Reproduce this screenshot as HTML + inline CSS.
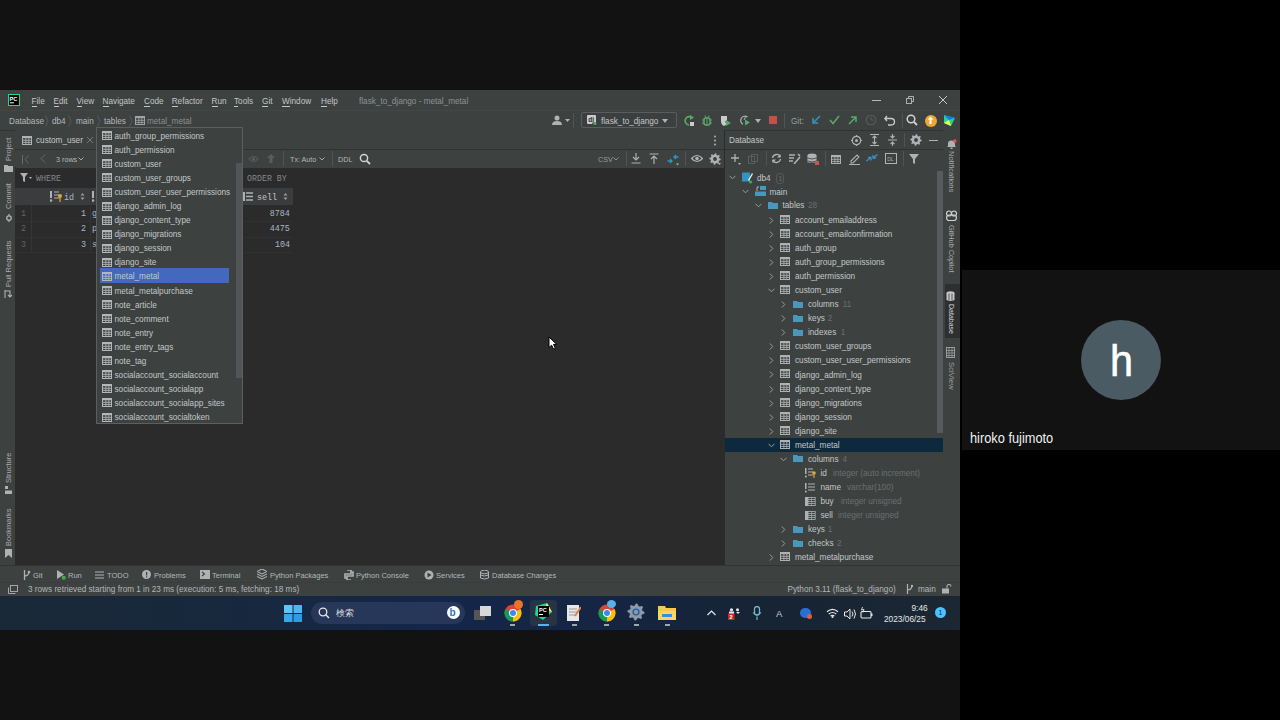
<!DOCTYPE html>
<html><head><meta charset="utf-8">
<style>
*{margin:0;padding:0;box-sizing:border-box}
html,body{width:1280px;height:720px;overflow:hidden;background:#000;font-family:"Liberation Sans",sans-serif;}
.a{position:absolute}
.t{position:absolute;white-space:nowrap;line-height:10px;color:#bbbbbb}
.m{position:absolute;white-space:nowrap;line-height:10px;color:#bbbbbb;font-family:"Liberation Mono",monospace}
.v{position:absolute;white-space:nowrap;line-height:10px;color:#bbbbbb;transform-origin:0 0;transform:rotate(-90deg)}
</style></head><body>

<div class="a" style="left:0px;top:0px;width:960px;height:720px;background:#121212;"></div>
<div class="a" style="left:0px;top:90px;width:960px;height:506px;background:#3d4241;"></div>
<svg class="a" style="left:8px;top:94px;" width="12" height="12" viewBox="0 0 12 12"><rect x="0" y="0" width="12" height="12" fill="#21d789"/><rect x="1" y="1" width="10" height="10" fill="#000"/><text x="1.6" y="6.6" font-size="5.6" font-weight="bold" fill="#fff" font-family="Liberation Sans">PC</text><rect x="2" y="8.3" width="4" height="1" fill="#fff"/></svg>
<div class="t" style="left:31.5px;top:96.5px;font-size:8.2px;color:#c4c4c4"><u style="text-decoration:none;border-bottom:0.8px solid #c4c4c4">F</u>ile</div>
<div class="t" style="left:53.5px;top:96.5px;font-size:8.2px;color:#c4c4c4"><u style="text-decoration:none;border-bottom:0.8px solid #c4c4c4">E</u>dit</div>
<div class="t" style="left:76.5px;top:96.5px;font-size:8.2px;color:#c4c4c4"><u style="text-decoration:none;border-bottom:0.8px solid #c4c4c4">V</u>iew</div>
<div class="t" style="left:102.6px;top:96.5px;font-size:8.2px;color:#c4c4c4"><u style="text-decoration:none;border-bottom:0.8px solid #c4c4c4">N</u>avigate</div>
<div class="t" style="left:144px;top:96.5px;font-size:8.2px;color:#c4c4c4"><u style="text-decoration:none;border-bottom:0.8px solid #c4c4c4">C</u>ode</div>
<div class="t" style="left:171.7px;top:96.5px;font-size:8.2px;color:#c4c4c4"><u style="text-decoration:none;border-bottom:0.8px solid #c4c4c4">R</u>efactor</div>
<div class="t" style="left:211.6px;top:96.5px;font-size:8.2px;color:#c4c4c4"><u style="text-decoration:none;border-bottom:0.8px solid #c4c4c4">R</u>un</div>
<div class="t" style="left:234px;top:96.5px;font-size:8.2px;color:#c4c4c4"><u style="text-decoration:none;border-bottom:0.8px solid #c4c4c4">T</u>ools</div>
<div class="t" style="left:262px;top:96.5px;font-size:8.2px;color:#c4c4c4"><u style="text-decoration:none;border-bottom:0.8px solid #c4c4c4">G</u>it</div>
<div class="t" style="left:282px;top:96.5px;font-size:8.2px;color:#c4c4c4"><u style="text-decoration:none;border-bottom:0.8px solid #c4c4c4">W</u>indow</div>
<div class="t" style="left:321px;top:96.5px;font-size:8.2px;color:#c4c4c4"><u style="text-decoration:none;border-bottom:0.8px solid #c4c4c4">H</u>elp</div>
<div class="t" style="left:359px;top:96.5px;font-size:8.2px;color:#8f9193;">flask_to_django - metal_metal</div>
<div class="a" style="left:872px;top:100px;width:9px;height:1px;background:#b8b8b8;"></div>
<svg class="a" style="left:905px;top:95px;" width="10" height="10" viewBox="0 0 10 10"><rect x="1.5" y="3.5" width="5" height="5" fill="none" stroke="#b0b0b0"/><path d="M3.5 3.5 V1.5 H8.5 V6.5 H6.5" fill="none" stroke="#b0b0b0"/></svg>
<svg class="a" style="left:938px;top:95px;" width="10" height="10" viewBox="0 0 10 10"><path d="M1 1 L9 9 M9 1 L1 9" stroke="#c8c8c8" stroke-width="1"/></svg>
<div class="t" style="left:9px;top:117.0px;font-size:8.2px;color:#b4b6b8;">Database</div>
<div class="t" style="left:52px;top:117.0px;font-size:8.2px;color:#b4b6b8;">db4</div>
<div class="t" style="left:76px;top:117.0px;font-size:8.2px;color:#b4b6b8;">main</div>
<div class="t" style="left:104px;top:117.0px;font-size:8.2px;color:#b4b6b8;">tables</div>
<svg class="a" style="left:45px;top:115px;" width="4" height="12" viewBox="0 0 4 12"><path d="M0.5 0.5 L3 6 L0.5 11.5" fill="none" stroke="#5d6062" stroke-width="0.8"/></svg>
<svg class="a" style="left:68px;top:115px;" width="4" height="12" viewBox="0 0 4 12"><path d="M0.5 0.5 L3 6 L0.5 11.5" fill="none" stroke="#5d6062" stroke-width="0.8"/></svg>
<svg class="a" style="left:97px;top:115px;" width="4" height="12" viewBox="0 0 4 12"><path d="M0.5 0.5 L3 6 L0.5 11.5" fill="none" stroke="#5d6062" stroke-width="0.8"/></svg>
<svg class="a" style="left:129px;top:115px;" width="4" height="12" viewBox="0 0 4 12"><path d="M0.5 0.5 L3 6 L0.5 11.5" fill="none" stroke="#5d6062" stroke-width="0.8"/></svg>
<svg class="a" style="left:135px;top:116px;" width="10" height="9" viewBox="0 0 10 9"><rect x="0.5" y="0.5" width="9" height="8" fill="none" stroke="#a0a2a4" stroke-width="1"/><rect x="0" y="0" width="10" height="2.2" fill="#a0a2a4"/><line x1="0" y1="4.3" x2="10" y2="4.3" stroke="#a0a2a4" stroke-width="0.9"/><line x1="0" y1="6.4" x2="10" y2="6.4" stroke="#a0a2a4" stroke-width="0.9"/><line x1="3.9" y1="2" x2="3.9" y2="9" stroke="#a0a2a4" stroke-width="0.8"/><line x1="6.8" y1="2" x2="6.8" y2="9" stroke="#a0a2a4" stroke-width="0.8"/></svg>
<div class="t" style="left:147px;top:117.0px;font-size:8.2px;color:#8c8e90;">metal_metal</div>
<svg class="a" style="left:551px;top:115px;" width="12" height="11" viewBox="0 0 12 11"><circle cx="6" cy="3" r="2.5" fill="#afb1b3"/><path d="M1 10 Q1 6 6 6 Q11 6 11 10 Z" fill="#afb1b3"/></svg>
<svg class="a" style="left:565px;top:119px;" width="5" height="3" viewBox="0 0 5 3"><path d="M0 0 H5 L2.5 3Z" fill="#afb1b3"/></svg>
<div class="a" style="left:580.5px;top:112px;width:96.5px;height:15.5px;border:1px solid #5a5e5e;border-radius:2px;background:#3b3f3f"></div>
<svg class="a" style="left:587px;top:115px;" width="10" height="10" viewBox="0 0 10 10"><rect x="0" y="0" width="9" height="9" rx="1" fill="#c9cbcd"/><text x="1.3" y="7" font-size="6.5" fill="#2b2b2b" font-family="Liberation Sans" font-weight="bold">dj</text><circle cx="8" cy="8.5" r="1.6" fill="#3fae4a"/></svg>
<div class="t" style="left:601px;top:116.5px;font-size:8.2px;color:#c4c6c8;">flask_to_django</div>
<svg class="a" style="left:662px;top:119px;" width="6" height="4" viewBox="0 0 6 4"><path d="M0 0 H6 L3 4Z" fill="#afb1b3"/></svg>
<svg class="a" style="left:684px;top:115px;" width="11" height="11" viewBox="0 0 11 11"><path d="M8.5 3 A4.2 4.2 0 1 0 5 10" fill="none" stroke="#59a869" stroke-width="1.6"/><path d="M6 0 L10 2.5 L6 5Z" fill="#59a869"/><rect x="6" y="7" width="4" height="4" fill="#c8cacc"/></svg>
<svg class="a" style="left:702px;top:115px;" width="10" height="11" viewBox="0 0 10 11"><rect x="2" y="3" width="6" height="7" rx="2" fill="none" stroke="#59a869" stroke-width="1.5"/><path d="M0 5 H2 M8 5 H10 M0 8 H2 M8 8 H10 M3 0.5 L4 3 M7 0.5 L6 3 M5 3 V10" stroke="#59a869" stroke-width="1"/></svg>
<svg class="a" style="left:720px;top:115px;" width="12" height="12" viewBox="0 0 12 12"><path d="M1 1 H7 V5 L5 7 L7 9 Q5 10.5 4 11 Q1 9.5 1 6 Z" fill="#c8cacc"/><path d="M6 5 L11 8 L6 11Z" fill="#59a869"/></svg>
<svg class="a" style="left:739px;top:114px;" width="12" height="12" viewBox="0 0 12 12"><path d="M8.5 3 A4.3 4.3 0 1 0 4 10.3" fill="none" stroke="#afb1b3" stroke-width="1.2"/><path d="M5 6 L6.5 3" stroke="#afb1b3" stroke-width="1"/><path d="M6 5.5 L11 8.5 L6 11.5Z" fill="#59a869"/></svg>
<svg class="a" style="left:755px;top:119px;" width="6" height="4" viewBox="0 0 6 4"><path d="M0 0 H6 L3 4Z" fill="#afb1b3"/></svg>
<div class="a" style="left:768.5px;top:116px;width:8.5px;height:8px;background:#c4504b;"></div>
<div class="a" style="left:784px;top:113px;width:1px;height:15px;background:#515456;"></div>
<div class="t" style="left:791px;top:116.5px;font-size:8.2px;color:#9a9c9e;">Git:</div>
<svg class="a" style="left:811px;top:115px;" width="10" height="10" viewBox="0 0 10 10"><path d="M9 1 L2 8 M2 3 V8 H7" fill="none" stroke="#3592c4" stroke-width="1.5"/></svg>
<svg class="a" style="left:829px;top:115px;" width="11" height="10" viewBox="0 0 11 10"><path d="M1 5 L4 8.5 L10 1" fill="none" stroke="#59a869" stroke-width="1.6"/></svg>
<svg class="a" style="left:848px;top:115px;" width="10" height="10" viewBox="0 0 10 10"><path d="M1 9 L8 2 M3 2 H8 V7" fill="none" stroke="#59a869" stroke-width="1.5"/></svg>
<svg class="a" style="left:865px;top:114px;" width="12" height="12" viewBox="0 0 12 12"><circle cx="6" cy="6" r="4.8" fill="none" stroke="#5a5d5f" stroke-width="1.1"/><path d="M6 3 V6 H8.5" fill="none" stroke="#5a5d5f"/></svg>
<svg class="a" style="left:884px;top:115px;" width="12" height="11" viewBox="0 0 12 11"><path d="M3 1 L0.8 3.5 L3 6 M1 3.5 H7 Q10.5 3.5 10.5 6.8 Q10.5 10 7 10 H4" fill="none" stroke="#c8cacc" stroke-width="1.3"/></svg>
<div class="a" style="left:901.5px;top:113px;width:1px;height:15px;background:#515456;"></div>
<svg class="a" style="left:906px;top:114px;" width="12" height="12" viewBox="0 0 12 12"><circle cx="5" cy="5" r="3.8" fill="none" stroke="#d0d2d4" stroke-width="1.5"/><path d="M8 8 L11 11" stroke="#d0d2d4" stroke-width="1.8"/></svg>
<div class="a" style="left:924.5px;top:114.5px;width:12px;height:12px;border-radius:50%;background:#f0a732"></div>
<svg class="a" style="left:927px;top:116px;" width="7" height="9" viewBox="0 0 7 9"><path d="M3.5 0.5 L0.5 3.5 H2.5 V8 H4.5 V3.5 H6.5Z" fill="#fff"/></svg>
<svg class="a" style="left:943px;top:114px;" width="13" height="13" viewBox="0 0 13 13"><path d="M1 1 L12 4 L8 12 L1 9Z" fill="#21d789"/><path d="M1 1 L12 4 L6 6Z" fill="#087cfa"/><path d="M1 9 L6 6 L8 12Z" fill="#fcf84a"/></svg>
<div class="a" style="left:0px;top:129.5px;width:960px;height:1px;background:#313434;"></div>
<div class="a" style="left:0px;top:109.5px;width:960px;height:1px;background:#424646;"></div>
<div class="a" style="left:573px;top:113px;width:1px;height:15px;background:#505455;"></div>
<div class="a" style="left:15px;top:130px;width:1px;height:435px;background:#323232;"></div>
<div class="v" style="left:3.5px;top:160.5px;font-size:7.5px;color:#a9abad">Project</div>
<svg class="a" style="left:4px;top:163.5px;" width="9" height="8" viewBox="0 0 9 8"><path d="M0 1 H3.5 L4.5 2 H9 V8 H0Z" fill="#afb1b3"/></svg>
<div class="v" style="left:3.5px;top:208.5px;font-size:7.5px;color:#a9abad">Commit</div>
<svg class="a" style="left:3.5px;top:213.5px;" width="10" height="8" viewBox="0 0 10 8"><circle cx="5" cy="4" r="2.2" fill="none" stroke="#afb1b3" stroke-width="1.3"/><path d="M5 0 V1.8 M5 6.2 V8" stroke="#afb1b3" stroke-width="1.3"/></svg>
<div class="v" style="left:3.5px;top:286.5px;font-size:7.5px;color:#a9abad">Pull Requests</div>
<svg class="a" style="left:4px;top:290px;" width="8" height="8" viewBox="0 0 8 8"><path d="M1 0 V8 M1 1 H6 V7 M4 5 L6 7 L8 5" fill="none" stroke="#afb1b3" stroke-width="1.1"/></svg>
<div class="v" style="left:3.5px;top:482.5px;font-size:7.5px;color:#a9abad">Structure</div>
<svg class="a" style="left:5px;top:486px;" width="7" height="8" viewBox="0 0 7 8"><rect x="0" y="0" width="3" height="3" fill="#afb1b3"/><rect x="0" y="4.5" width="7" height="3.5" fill="#afb1b3"/></svg>
<div class="v" style="left:3.5px;top:546px;font-size:7.5px;color:#a9abad">Bookmarks</div>
<svg class="a" style="left:5px;top:549px;" width="7" height="9" viewBox="0 0 7 9"><path d="M0 0 H7 V9 L3.5 6 L0 9Z" fill="#afb1b3"/></svg>
<div class="a" style="left:15px;top:130px;width:709px;height:19px;background:#3d4241;"></div>
<div class="a" style="left:15px;top:148.6px;width:709px;height:1px;background:#303332;"></div>
<svg class="a" style="left:22px;top:135.5px;" width="10" height="9" viewBox="0 0 10 9"><rect x="0.5" y="0.5" width="9" height="8" fill="none" stroke="#afb1b3" stroke-width="1"/><rect x="0" y="0" width="10" height="2.2" fill="#afb1b3"/><line x1="0" y1="4.3" x2="10" y2="4.3" stroke="#afb1b3" stroke-width="0.9"/><line x1="0" y1="6.4" x2="10" y2="6.4" stroke="#afb1b3" stroke-width="0.9"/><line x1="3.9" y1="2" x2="3.9" y2="9" stroke="#afb1b3" stroke-width="0.8"/><line x1="6.8" y1="2" x2="6.8" y2="9" stroke="#afb1b3" stroke-width="0.8"/></svg>
<div class="t" style="left:36px;top:135.5px;font-size:8.2px;color:#c4c6c8;">custom_user</div>
<svg class="a" style="left:86px;top:136px;" width="8" height="8" viewBox="0 0 8 8"><path d="M1 1 L7 7 M7 1 L1 7" stroke="#7d7f81" stroke-width="0.9"/></svg>
<svg class="a" style="left:713px;top:135px;" width="4" height="11" viewBox="0 0 4 11"><circle cx="2" cy="1.5" r="1" fill="#afb1b3"/><circle cx="2" cy="5.5" r="1" fill="#afb1b3"/><circle cx="2" cy="9.5" r="1" fill="#afb1b3"/></svg>
<div class="a" style="left:15px;top:149.6px;width:709px;height:17.9px;background:#3d4241;"></div>
<svg class="a" style="left:21.5px;top:155px;" width="8" height="9" viewBox="0 0 8 9"><path d="M0.5 0 V9 M6.5 0.5 L3 4.5 L6.5 8.5" fill="none" stroke="#6c6e70" stroke-width="0.9"/></svg>
<svg class="a" style="left:40px;top:154px;" width="6" height="9" viewBox="0 0 6 9"><path d="M5 0.5 L1 4.5 L5 8.5" fill="none" stroke="#6c6e70" stroke-width="0.9"/></svg>
<div class="t" style="left:56px;top:154.5px;font-size:7.2px;color:#b4b6b8;">3 rows</div>
<svg class="a" style="left:78px;top:157px;" width="6" height="4" viewBox="0 0 6 4"><path d="M0.5 0.5 L3 3 L5.5 0.5" fill="none" stroke="#b4b6b8" stroke-width="0.9"/></svg>
<svg class="a" style="left:248px;top:154px;" width="11" height="10" viewBox="0 0 11 10"><path d="M1 5 Q5.5 0 10 5 Q5.5 10 1 5Z" fill="none" stroke="#5a5d5f" stroke-width="1.1"/><circle cx="5.5" cy="5" r="1.6" fill="#5a5d5f"/></svg>
<svg class="a" style="left:266px;top:153px;" width="10" height="11" viewBox="0 0 10 11"><path d="M5 1 L1 5 H3.5 V10 H6.5 V5 H9Z" fill="#5a5d5f"/></svg>
<div class="a" style="left:283px;top:151px;width:1px;height:15px;background:#515456;"></div>
<div class="t" style="left:290px;top:154.5px;font-size:7.2px;color:#b4b6b8;">Tx: Auto</div>
<svg class="a" style="left:319px;top:157px;" width="6" height="4" viewBox="0 0 6 4"><path d="M0.5 0.5 L3 3 L5.5 0.5" fill="none" stroke="#b4b6b8" stroke-width="0.9"/></svg>
<div class="a" style="left:332px;top:151px;width:1px;height:15px;background:#515456;"></div>
<div class="t" style="left:338px;top:154.5px;font-size:7.2px;color:#b4b6b8;">DDL</div>
<svg class="a" style="left:359px;top:153px;" width="12" height="12" viewBox="0 0 12 12"><circle cx="5" cy="5" r="3.6" fill="none" stroke="#d0d2d4" stroke-width="1.5"/><path d="M7.8 7.8 L11 11" stroke="#d0d2d4" stroke-width="1.8"/></svg>
<div class="t" style="left:598px;top:154.5px;font-size:7.2px;color:#9a9c9e;">CSV</div>
<svg class="a" style="left:613px;top:157px;" width="6" height="4" viewBox="0 0 6 4"><path d="M0.5 0.5 L3 3 L5.5 0.5" fill="none" stroke="#9a9c9e" stroke-width="0.9"/></svg>
<div class="a" style="left:626px;top:151px;width:1px;height:15px;background:#515456;"></div>
<svg class="a" style="left:631px;top:153px;" width="10" height="11" viewBox="0 0 10 11"><path d="M5 0 V7 M2 4 L5 7 L8 4 M0.5 10 H9.5" fill="none" stroke="#afb1b3" stroke-width="1.2"/></svg>
<svg class="a" style="left:649px;top:153px;" width="10" height="11" viewBox="0 0 10 11"><path d="M5 11 V3 M2 6 L5 3 L8 6 M0.5 1 H9.5" fill="none" stroke="#afb1b3" stroke-width="1.2"/></svg>
<svg class="a" style="left:667px;top:153px;" width="13" height="13" viewBox="0 0 13 13"><path d="M0.5 8 H5 M3 6 L5 8 L3 10" fill="none" stroke="#3592c4" stroke-width="1.3"/><path d="M11.5 4 H7 M9 2 L7 4 L9 6" fill="none" stroke="#3592c4" stroke-width="1.3"/><path d="M9 10.5 H12 L10.5 12.5Z" fill="#afb1b3"/></svg>
<div class="a" style="left:685px;top:151px;width:1px;height:15px;background:#515456;"></div>
<svg class="a" style="left:691px;top:154px;" width="12" height="10" viewBox="0 0 12 10"><path d="M0.5 4.5 Q6 -1.5 11.5 4.5 Q6 10.5 0.5 4.5Z" fill="none" stroke="#afb1b3" stroke-width="1.2"/><circle cx="6" cy="4.5" r="1.8" fill="#afb1b3"/></svg>
<svg class="a" style="left:709px;top:153px;" width="12" height="12" viewBox="0 0 12 12"><path d="M6.00 0.24 L7.12 0.35 L7.65 2.01 L8.40 2.41 L10.07 1.93 L10.79 2.80 L9.99 4.35 L10.24 5.16 L11.76 6.00 L11.65 7.12 L9.99 7.65 L9.59 8.40 L10.07 10.07 L9.20 10.79 L7.65 9.99 L6.84 10.24 L6.00 11.76 L4.88 11.65 L4.35 9.99 L3.60 9.59 L1.93 10.07 L1.21 9.20 L2.01 7.65 L1.76 6.84 L0.24 6.00 L0.35 4.88 L2.01 4.35 L2.41 3.60 L1.93 1.93 L2.80 1.21 L4.35 2.01 L5.16 1.76Z" fill="#afb1b3"/><circle cx="6.0" cy="6.0" r="1.92" fill="#3c3f41"/><path d="M9 10 H12 L10.5 12Z" fill="#afb1b3"/></svg>
<div class="a" style="left:15px;top:167.5px;width:709px;height:20.5px;background:#2b2b2b;"></div>
<svg class="a" style="left:20px;top:173px;" width="12" height="10" viewBox="0 0 12 10"><path d="M0 0 H8 L5 4 V9 L3 8 V4Z" fill="#afb1b3"/><path d="M9 4 H12 L10.5 6Z" fill="#afb1b3"/></svg>
<div class="m" style="left:36px;top:174px;font-size:8.3px;color:#85878a">WHERE</div>
<div class="m" style="left:247px;top:174px;font-size:8.3px;color:#85878a">ORDER BY</div>
<div class="a" style="left:15px;top:188px;width:709px;height:377px;background:#2b2b2b;"></div>
<div class="a" style="left:15px;top:188px;width:278px;height:17px;background:#3a3c3e;"></div>
<div class="a" style="left:15px;top:205px;width:278px;height:47px;background:#2b2b2b;"></div>
<div class="a" style="left:15px;top:221px;width:278px;height:0.8px;background:#303232;"></div>
<div class="a" style="left:15px;top:236.5px;width:278px;height:0.8px;background:#303232;"></div>
<div class="a" style="left:15px;top:252px;width:278px;height:0.8px;background:#303232;"></div>
<div class="a" style="left:31px;top:205px;width:0.8px;height:47px;background:#333537;"></div>
<div class="a" style="left:89.5px;top:188px;width:0.8px;height:64px;background:#333537;"></div>
<svg class="a" style="left:50px;top:191px;" width="13" height="11" viewBox="0 0 13 11"><rect x="0" y="0" width="2" height="7" fill="#afb1b3"/><circle cx="1" cy="9.5" r="1.3" fill="#afb1b3"/><path d="M4 1 H9 M4 4 H9 M4 7 H9" stroke="#afb1b3" stroke-width="1.2"/><circle cx="10" cy="5" r="2" fill="#e0a733"/><path d="M10 6 V11" stroke="#e0a733" stroke-width="1.2"/></svg>
<div class="m" style="left:64px;top:193px;font-size:8.4px;color:#a9b7c6">id</div>
<svg class="a" style="left:80px;top:192px;" width="5" height="9" viewBox="0 0 5 9"><path d="M0.5 3.5 L2.5 1 L4.5 3.5 M0.5 5.5 L2.5 8 L4.5 5.5" fill="#9a9c9e"/></svg>
<svg class="a" style="left:92px;top:191px;" width="3" height="11" viewBox="0 0 3 11"><rect x="0" y="0" width="2" height="7" fill="#afb1b3"/><circle cx="1" cy="9.5" r="1.3" fill="#afb1b3"/></svg>
<svg class="a" style="left:243px;top:192px;" width="10" height="9" viewBox="0 0 10 9"><rect x="0" y="0" width="2" height="9" fill="#afb1b3"/><path d="M3 1 H10 M3 4.5 H10 M3 8 H10" stroke="#afb1b3" stroke-width="1.3"/></svg>
<div class="m" style="left:257px;top:193px;font-size:8.4px;color:#c4c6c8">sell</div>
<svg class="a" style="left:283px;top:192px;" width="5" height="9" viewBox="0 0 5 9"><path d="M0.5 3.5 L2.5 1 L4.5 3.5 M0.5 5.5 L2.5 8 L4.5 5.5" fill="#9a9c9e"/></svg>
<div class="m" style="left:21px;top:208.5px;font-size:8.4px;color:#606366">1</div>
<div class="m" style="left:81px;top:208.5px;font-size:8.4px;color:#a9b7c6">1</div>
<div class="m" style="left:92px;top:208.5px;font-size:8.4px;color:#a9b7c6">g</div>
<div class="m" style="left:269.8px;top:208.5px;font-size:8.4px;color:#a9b7c6">8784</div>
<div class="m" style="left:21px;top:224.0px;font-size:8.4px;color:#606366">2</div>
<div class="m" style="left:81px;top:224.0px;font-size:8.4px;color:#a9b7c6">2</div>
<div class="m" style="left:92px;top:224.0px;font-size:8.4px;color:#a9b7c6">p</div>
<div class="m" style="left:269.8px;top:224.0px;font-size:8.4px;color:#a9b7c6">4475</div>
<div class="m" style="left:21px;top:239.5px;font-size:8.4px;color:#606366">3</div>
<div class="m" style="left:81px;top:239.5px;font-size:8.4px;color:#a9b7c6">3</div>
<div class="m" style="left:92px;top:239.5px;font-size:8.4px;color:#a9b7c6">s</div>
<div class="m" style="left:274.9px;top:239.5px;font-size:8.4px;color:#a9b7c6">104</div>
<div class="a" style="left:96px;top:127px;width:147px;height:297px;background:#3d4241;border:1px solid #5b5f5f"></div>
<div class="a" style="left:100px;top:268.3px;width:129px;height:14.3px;background:#4269bd;"></div>
<svg class="a" style="left:102px;top:131.3px;" width="10" height="9" viewBox="0 0 10 9"><rect x="0.5" y="0.5" width="9" height="8" fill="none" stroke="#b4b6b8" stroke-width="1"/><rect x="0" y="0" width="10" height="2.2" fill="#b4b6b8"/><line x1="0" y1="4.3" x2="10" y2="4.3" stroke="#b4b6b8" stroke-width="0.9"/><line x1="0" y1="6.4" x2="10" y2="6.4" stroke="#b4b6b8" stroke-width="0.9"/><line x1="3.9" y1="2" x2="3.9" y2="9" stroke="#b4b6b8" stroke-width="0.8"/><line x1="6.8" y1="2" x2="6.8" y2="9" stroke="#b4b6b8" stroke-width="0.8"/></svg>
<div class="t" style="left:114.5px;top:131.8px;font-size:8.2px;color:#c4c6c8;">auth_group_permissions</div>
<svg class="a" style="left:102px;top:145.36px;" width="10" height="9" viewBox="0 0 10 9"><rect x="0.5" y="0.5" width="9" height="8" fill="none" stroke="#b4b6b8" stroke-width="1"/><rect x="0" y="0" width="10" height="2.2" fill="#b4b6b8"/><line x1="0" y1="4.3" x2="10" y2="4.3" stroke="#b4b6b8" stroke-width="0.9"/><line x1="0" y1="6.4" x2="10" y2="6.4" stroke="#b4b6b8" stroke-width="0.9"/><line x1="3.9" y1="2" x2="3.9" y2="9" stroke="#b4b6b8" stroke-width="0.8"/><line x1="6.8" y1="2" x2="6.8" y2="9" stroke="#b4b6b8" stroke-width="0.8"/></svg>
<div class="t" style="left:114.5px;top:145.9px;font-size:8.2px;color:#c4c6c8;">auth_permission</div>
<svg class="a" style="left:102px;top:159.42000000000002px;" width="10" height="9" viewBox="0 0 10 9"><rect x="0.5" y="0.5" width="9" height="8" fill="none" stroke="#b4b6b8" stroke-width="1"/><rect x="0" y="0" width="10" height="2.2" fill="#b4b6b8"/><line x1="0" y1="4.3" x2="10" y2="4.3" stroke="#b4b6b8" stroke-width="0.9"/><line x1="0" y1="6.4" x2="10" y2="6.4" stroke="#b4b6b8" stroke-width="0.9"/><line x1="3.9" y1="2" x2="3.9" y2="9" stroke="#b4b6b8" stroke-width="0.8"/><line x1="6.8" y1="2" x2="6.8" y2="9" stroke="#b4b6b8" stroke-width="0.8"/></svg>
<div class="t" style="left:114.5px;top:159.9px;font-size:8.2px;color:#c4c6c8;">custom_user</div>
<svg class="a" style="left:102px;top:173.48000000000002px;" width="10" height="9" viewBox="0 0 10 9"><rect x="0.5" y="0.5" width="9" height="8" fill="none" stroke="#b4b6b8" stroke-width="1"/><rect x="0" y="0" width="10" height="2.2" fill="#b4b6b8"/><line x1="0" y1="4.3" x2="10" y2="4.3" stroke="#b4b6b8" stroke-width="0.9"/><line x1="0" y1="6.4" x2="10" y2="6.4" stroke="#b4b6b8" stroke-width="0.9"/><line x1="3.9" y1="2" x2="3.9" y2="9" stroke="#b4b6b8" stroke-width="0.8"/><line x1="6.8" y1="2" x2="6.8" y2="9" stroke="#b4b6b8" stroke-width="0.8"/></svg>
<div class="t" style="left:114.5px;top:174.0px;font-size:8.2px;color:#c4c6c8;">custom_user_groups</div>
<svg class="a" style="left:102px;top:187.54000000000002px;" width="10" height="9" viewBox="0 0 10 9"><rect x="0.5" y="0.5" width="9" height="8" fill="none" stroke="#b4b6b8" stroke-width="1"/><rect x="0" y="0" width="10" height="2.2" fill="#b4b6b8"/><line x1="0" y1="4.3" x2="10" y2="4.3" stroke="#b4b6b8" stroke-width="0.9"/><line x1="0" y1="6.4" x2="10" y2="6.4" stroke="#b4b6b8" stroke-width="0.9"/><line x1="3.9" y1="2" x2="3.9" y2="9" stroke="#b4b6b8" stroke-width="0.8"/><line x1="6.8" y1="2" x2="6.8" y2="9" stroke="#b4b6b8" stroke-width="0.8"/></svg>
<div class="t" style="left:114.5px;top:188.0px;font-size:8.2px;color:#c4c6c8;">custom_user_user_permissions</div>
<svg class="a" style="left:102px;top:201.60000000000002px;" width="10" height="9" viewBox="0 0 10 9"><rect x="0.5" y="0.5" width="9" height="8" fill="none" stroke="#b4b6b8" stroke-width="1"/><rect x="0" y="0" width="10" height="2.2" fill="#b4b6b8"/><line x1="0" y1="4.3" x2="10" y2="4.3" stroke="#b4b6b8" stroke-width="0.9"/><line x1="0" y1="6.4" x2="10" y2="6.4" stroke="#b4b6b8" stroke-width="0.9"/><line x1="3.9" y1="2" x2="3.9" y2="9" stroke="#b4b6b8" stroke-width="0.8"/><line x1="6.8" y1="2" x2="6.8" y2="9" stroke="#b4b6b8" stroke-width="0.8"/></svg>
<div class="t" style="left:114.5px;top:202.1px;font-size:8.2px;color:#c4c6c8;">django_admin_log</div>
<svg class="a" style="left:102px;top:215.66000000000003px;" width="10" height="9" viewBox="0 0 10 9"><rect x="0.5" y="0.5" width="9" height="8" fill="none" stroke="#b4b6b8" stroke-width="1"/><rect x="0" y="0" width="10" height="2.2" fill="#b4b6b8"/><line x1="0" y1="4.3" x2="10" y2="4.3" stroke="#b4b6b8" stroke-width="0.9"/><line x1="0" y1="6.4" x2="10" y2="6.4" stroke="#b4b6b8" stroke-width="0.9"/><line x1="3.9" y1="2" x2="3.9" y2="9" stroke="#b4b6b8" stroke-width="0.8"/><line x1="6.8" y1="2" x2="6.8" y2="9" stroke="#b4b6b8" stroke-width="0.8"/></svg>
<div class="t" style="left:114.5px;top:216.2px;font-size:8.2px;color:#c4c6c8;">django_content_type</div>
<svg class="a" style="left:102px;top:229.72000000000003px;" width="10" height="9" viewBox="0 0 10 9"><rect x="0.5" y="0.5" width="9" height="8" fill="none" stroke="#b4b6b8" stroke-width="1"/><rect x="0" y="0" width="10" height="2.2" fill="#b4b6b8"/><line x1="0" y1="4.3" x2="10" y2="4.3" stroke="#b4b6b8" stroke-width="0.9"/><line x1="0" y1="6.4" x2="10" y2="6.4" stroke="#b4b6b8" stroke-width="0.9"/><line x1="3.9" y1="2" x2="3.9" y2="9" stroke="#b4b6b8" stroke-width="0.8"/><line x1="6.8" y1="2" x2="6.8" y2="9" stroke="#b4b6b8" stroke-width="0.8"/></svg>
<div class="t" style="left:114.5px;top:230.2px;font-size:8.2px;color:#c4c6c8;">django_migrations</div>
<svg class="a" style="left:102px;top:243.78000000000003px;" width="10" height="9" viewBox="0 0 10 9"><rect x="0.5" y="0.5" width="9" height="8" fill="none" stroke="#b4b6b8" stroke-width="1"/><rect x="0" y="0" width="10" height="2.2" fill="#b4b6b8"/><line x1="0" y1="4.3" x2="10" y2="4.3" stroke="#b4b6b8" stroke-width="0.9"/><line x1="0" y1="6.4" x2="10" y2="6.4" stroke="#b4b6b8" stroke-width="0.9"/><line x1="3.9" y1="2" x2="3.9" y2="9" stroke="#b4b6b8" stroke-width="0.8"/><line x1="6.8" y1="2" x2="6.8" y2="9" stroke="#b4b6b8" stroke-width="0.8"/></svg>
<div class="t" style="left:114.5px;top:244.3px;font-size:8.2px;color:#c4c6c8;">django_session</div>
<svg class="a" style="left:102px;top:257.84000000000003px;" width="10" height="9" viewBox="0 0 10 9"><rect x="0.5" y="0.5" width="9" height="8" fill="none" stroke="#b4b6b8" stroke-width="1"/><rect x="0" y="0" width="10" height="2.2" fill="#b4b6b8"/><line x1="0" y1="4.3" x2="10" y2="4.3" stroke="#b4b6b8" stroke-width="0.9"/><line x1="0" y1="6.4" x2="10" y2="6.4" stroke="#b4b6b8" stroke-width="0.9"/><line x1="3.9" y1="2" x2="3.9" y2="9" stroke="#b4b6b8" stroke-width="0.8"/><line x1="6.8" y1="2" x2="6.8" y2="9" stroke="#b4b6b8" stroke-width="0.8"/></svg>
<div class="t" style="left:114.5px;top:258.3px;font-size:8.2px;color:#c4c6c8;">django_site</div>
<svg class="a" style="left:102px;top:271.9px;" width="10" height="9" viewBox="0 0 10 9"><rect x="0.5" y="0.5" width="9" height="8" fill="none" stroke="#b4b6b8" stroke-width="1"/><rect x="0" y="0" width="10" height="2.2" fill="#b4b6b8"/><line x1="0" y1="4.3" x2="10" y2="4.3" stroke="#b4b6b8" stroke-width="0.9"/><line x1="0" y1="6.4" x2="10" y2="6.4" stroke="#b4b6b8" stroke-width="0.9"/><line x1="3.9" y1="2" x2="3.9" y2="9" stroke="#b4b6b8" stroke-width="0.8"/><line x1="6.8" y1="2" x2="6.8" y2="9" stroke="#b4b6b8" stroke-width="0.8"/></svg>
<div class="t" style="left:114.5px;top:272.4px;font-size:8.2px;color:#c4c6c8;">metal_metal</div>
<svg class="a" style="left:102px;top:285.96000000000004px;" width="10" height="9" viewBox="0 0 10 9"><rect x="0.5" y="0.5" width="9" height="8" fill="none" stroke="#b4b6b8" stroke-width="1"/><rect x="0" y="0" width="10" height="2.2" fill="#b4b6b8"/><line x1="0" y1="4.3" x2="10" y2="4.3" stroke="#b4b6b8" stroke-width="0.9"/><line x1="0" y1="6.4" x2="10" y2="6.4" stroke="#b4b6b8" stroke-width="0.9"/><line x1="3.9" y1="2" x2="3.9" y2="9" stroke="#b4b6b8" stroke-width="0.8"/><line x1="6.8" y1="2" x2="6.8" y2="9" stroke="#b4b6b8" stroke-width="0.8"/></svg>
<div class="t" style="left:114.5px;top:286.5px;font-size:8.2px;color:#c4c6c8;">metal_metalpurchase</div>
<svg class="a" style="left:102px;top:300.02px;" width="10" height="9" viewBox="0 0 10 9"><rect x="0.5" y="0.5" width="9" height="8" fill="none" stroke="#b4b6b8" stroke-width="1"/><rect x="0" y="0" width="10" height="2.2" fill="#b4b6b8"/><line x1="0" y1="4.3" x2="10" y2="4.3" stroke="#b4b6b8" stroke-width="0.9"/><line x1="0" y1="6.4" x2="10" y2="6.4" stroke="#b4b6b8" stroke-width="0.9"/><line x1="3.9" y1="2" x2="3.9" y2="9" stroke="#b4b6b8" stroke-width="0.8"/><line x1="6.8" y1="2" x2="6.8" y2="9" stroke="#b4b6b8" stroke-width="0.8"/></svg>
<div class="t" style="left:114.5px;top:300.5px;font-size:8.2px;color:#c4c6c8;">note_article</div>
<svg class="a" style="left:102px;top:314.08000000000004px;" width="10" height="9" viewBox="0 0 10 9"><rect x="0.5" y="0.5" width="9" height="8" fill="none" stroke="#b4b6b8" stroke-width="1"/><rect x="0" y="0" width="10" height="2.2" fill="#b4b6b8"/><line x1="0" y1="4.3" x2="10" y2="4.3" stroke="#b4b6b8" stroke-width="0.9"/><line x1="0" y1="6.4" x2="10" y2="6.4" stroke="#b4b6b8" stroke-width="0.9"/><line x1="3.9" y1="2" x2="3.9" y2="9" stroke="#b4b6b8" stroke-width="0.8"/><line x1="6.8" y1="2" x2="6.8" y2="9" stroke="#b4b6b8" stroke-width="0.8"/></svg>
<div class="t" style="left:114.5px;top:314.6px;font-size:8.2px;color:#c4c6c8;">note_comment</div>
<svg class="a" style="left:102px;top:328.14px;" width="10" height="9" viewBox="0 0 10 9"><rect x="0.5" y="0.5" width="9" height="8" fill="none" stroke="#b4b6b8" stroke-width="1"/><rect x="0" y="0" width="10" height="2.2" fill="#b4b6b8"/><line x1="0" y1="4.3" x2="10" y2="4.3" stroke="#b4b6b8" stroke-width="0.9"/><line x1="0" y1="6.4" x2="10" y2="6.4" stroke="#b4b6b8" stroke-width="0.9"/><line x1="3.9" y1="2" x2="3.9" y2="9" stroke="#b4b6b8" stroke-width="0.8"/><line x1="6.8" y1="2" x2="6.8" y2="9" stroke="#b4b6b8" stroke-width="0.8"/></svg>
<div class="t" style="left:114.5px;top:328.6px;font-size:8.2px;color:#c4c6c8;">note_entry</div>
<svg class="a" style="left:102px;top:342.20000000000005px;" width="10" height="9" viewBox="0 0 10 9"><rect x="0.5" y="0.5" width="9" height="8" fill="none" stroke="#b4b6b8" stroke-width="1"/><rect x="0" y="0" width="10" height="2.2" fill="#b4b6b8"/><line x1="0" y1="4.3" x2="10" y2="4.3" stroke="#b4b6b8" stroke-width="0.9"/><line x1="0" y1="6.4" x2="10" y2="6.4" stroke="#b4b6b8" stroke-width="0.9"/><line x1="3.9" y1="2" x2="3.9" y2="9" stroke="#b4b6b8" stroke-width="0.8"/><line x1="6.8" y1="2" x2="6.8" y2="9" stroke="#b4b6b8" stroke-width="0.8"/></svg>
<div class="t" style="left:114.5px;top:342.7px;font-size:8.2px;color:#c4c6c8;">note_entry_tags</div>
<svg class="a" style="left:102px;top:356.26px;" width="10" height="9" viewBox="0 0 10 9"><rect x="0.5" y="0.5" width="9" height="8" fill="none" stroke="#b4b6b8" stroke-width="1"/><rect x="0" y="0" width="10" height="2.2" fill="#b4b6b8"/><line x1="0" y1="4.3" x2="10" y2="4.3" stroke="#b4b6b8" stroke-width="0.9"/><line x1="0" y1="6.4" x2="10" y2="6.4" stroke="#b4b6b8" stroke-width="0.9"/><line x1="3.9" y1="2" x2="3.9" y2="9" stroke="#b4b6b8" stroke-width="0.8"/><line x1="6.8" y1="2" x2="6.8" y2="9" stroke="#b4b6b8" stroke-width="0.8"/></svg>
<div class="t" style="left:114.5px;top:356.8px;font-size:8.2px;color:#c4c6c8;">note_tag</div>
<svg class="a" style="left:102px;top:370.32000000000005px;" width="10" height="9" viewBox="0 0 10 9"><rect x="0.5" y="0.5" width="9" height="8" fill="none" stroke="#b4b6b8" stroke-width="1"/><rect x="0" y="0" width="10" height="2.2" fill="#b4b6b8"/><line x1="0" y1="4.3" x2="10" y2="4.3" stroke="#b4b6b8" stroke-width="0.9"/><line x1="0" y1="6.4" x2="10" y2="6.4" stroke="#b4b6b8" stroke-width="0.9"/><line x1="3.9" y1="2" x2="3.9" y2="9" stroke="#b4b6b8" stroke-width="0.8"/><line x1="6.8" y1="2" x2="6.8" y2="9" stroke="#b4b6b8" stroke-width="0.8"/></svg>
<div class="t" style="left:114.5px;top:370.8px;font-size:8.2px;color:#c4c6c8;">socialaccount_socialaccount</div>
<svg class="a" style="left:102px;top:384.38px;" width="10" height="9" viewBox="0 0 10 9"><rect x="0.5" y="0.5" width="9" height="8" fill="none" stroke="#b4b6b8" stroke-width="1"/><rect x="0" y="0" width="10" height="2.2" fill="#b4b6b8"/><line x1="0" y1="4.3" x2="10" y2="4.3" stroke="#b4b6b8" stroke-width="0.9"/><line x1="0" y1="6.4" x2="10" y2="6.4" stroke="#b4b6b8" stroke-width="0.9"/><line x1="3.9" y1="2" x2="3.9" y2="9" stroke="#b4b6b8" stroke-width="0.8"/><line x1="6.8" y1="2" x2="6.8" y2="9" stroke="#b4b6b8" stroke-width="0.8"/></svg>
<div class="t" style="left:114.5px;top:384.9px;font-size:8.2px;color:#c4c6c8;">socialaccount_socialapp</div>
<svg class="a" style="left:102px;top:398.44px;" width="10" height="9" viewBox="0 0 10 9"><rect x="0.5" y="0.5" width="9" height="8" fill="none" stroke="#b4b6b8" stroke-width="1"/><rect x="0" y="0" width="10" height="2.2" fill="#b4b6b8"/><line x1="0" y1="4.3" x2="10" y2="4.3" stroke="#b4b6b8" stroke-width="0.9"/><line x1="0" y1="6.4" x2="10" y2="6.4" stroke="#b4b6b8" stroke-width="0.9"/><line x1="3.9" y1="2" x2="3.9" y2="9" stroke="#b4b6b8" stroke-width="0.8"/><line x1="6.8" y1="2" x2="6.8" y2="9" stroke="#b4b6b8" stroke-width="0.8"/></svg>
<div class="t" style="left:114.5px;top:398.9px;font-size:8.2px;color:#c4c6c8;">socialaccount_socialapp_sites</div>
<svg class="a" style="left:102px;top:412.5px;" width="10" height="9" viewBox="0 0 10 9"><rect x="0.5" y="0.5" width="9" height="8" fill="none" stroke="#b4b6b8" stroke-width="1"/><rect x="0" y="0" width="10" height="2.2" fill="#b4b6b8"/><line x1="0" y1="4.3" x2="10" y2="4.3" stroke="#b4b6b8" stroke-width="0.9"/><line x1="0" y1="6.4" x2="10" y2="6.4" stroke="#b4b6b8" stroke-width="0.9"/><line x1="3.9" y1="2" x2="3.9" y2="9" stroke="#b4b6b8" stroke-width="0.8"/><line x1="6.8" y1="2" x2="6.8" y2="9" stroke="#b4b6b8" stroke-width="0.8"/></svg>
<div class="t" style="left:114.5px;top:413.0px;font-size:8.2px;color:#c4c6c8;">socialaccount_socialtoken</div>
<div class="a" style="left:236px;top:162.5px;width:6px;height:215px;background:#525557;"></div>
<div class="a" style="left:724px;top:130px;width:1px;height:435px;background:#2b2b2b;"></div>
<div class="t" style="left:729px;top:135.5px;font-size:8.2px;color:#c4c6c8;">Database</div>
<svg class="a" style="left:851px;top:135px;" width="11" height="11" viewBox="0 0 11 11"><circle cx="5.5" cy="5.5" r="4.2" fill="none" stroke="#afb1b3" stroke-width="1.2"/><circle cx="5.5" cy="5.5" r="1.5" fill="#afb1b3"/><path d="M5.5 0 V2 M5.5 9 V11 M0 5.5 H2 M9 5.5 H11" stroke="#afb1b3" stroke-width="1.2"/></svg>
<svg class="a" style="left:870px;top:134px;" width="9" height="12" viewBox="0 0 9 12"><path d="M0 0.5 H9 M0 11.5 H9 M4.5 2 V10 M2.5 4 L4.5 2 L6.5 4 M2.5 8 L4.5 10 L6.5 8" fill="none" stroke="#afb1b3" stroke-width="1.1"/></svg>
<svg class="a" style="left:888px;top:134px;" width="9" height="12" viewBox="0 0 9 12"><path d="M0 6 H9 M4.5 0 V4 M4.5 8 V12 M2.5 2 L4.5 4 L6.5 2 M2.5 10 L4.5 8 L6.5 10" fill="none" stroke="#afb1b3" stroke-width="1.1"/></svg>
<div class="a" style="left:904px;top:133px;width:1px;height:14px;background:#515456;"></div>
<svg class="a" style="left:910px;top:134px;" width="12" height="12" viewBox="0 0 12 12"><path d="M6.00 0.24 L7.12 0.35 L7.65 2.01 L8.40 2.41 L10.07 1.93 L10.79 2.80 L9.99 4.35 L10.24 5.16 L11.76 6.00 L11.65 7.12 L9.99 7.65 L9.59 8.40 L10.07 10.07 L9.20 10.79 L7.65 9.99 L6.84 10.24 L6.00 11.76 L4.88 11.65 L4.35 9.99 L3.60 9.59 L1.93 10.07 L1.21 9.20 L2.01 7.65 L1.76 6.84 L0.24 6.00 L0.35 4.88 L2.01 4.35 L2.41 3.60 L1.93 1.93 L2.80 1.21 L4.35 2.01 L5.16 1.76Z" fill="#afb1b3"/><circle cx="6.0" cy="6.0" r="1.92" fill="#3c3f41"/></svg>
<div class="a" style="left:929px;top:140px;width:9px;height:1.3px;background:#afb1b3;"></div>
<div class="a" style="left:725px;top:149px;width:218px;height:0.8px;background:#323232;"></div>
<svg class="a" style="left:730px;top:153px;" width="11" height="12" viewBox="0 0 11 12"><path d="M5 1 V9 M1 5 H9" stroke="#afb1b3" stroke-width="1.3"/><path d="M8 10 H11 L9.5 12Z" fill="#afb1b3"/></svg>
<svg class="a" style="left:748px;top:154px;" width="10" height="10" viewBox="0 0 10 10"><rect x="0.5" y="2.5" width="6" height="7" fill="none" stroke="#5a5d5f"/><rect x="3.5" y="0.5" width="6" height="7" fill="none" stroke="#5a5d5f"/></svg>
<div class="a" style="left:766px;top:151px;width:1px;height:15px;background:#515456;"></div>
<svg class="a" style="left:771px;top:153px;" width="11" height="11" viewBox="0 0 11 11"><path d="M9.5 4 A4.2 4.2 0 0 0 1.5 5 M1.5 7 A4.2 4.2 0 0 0 9.5 6" fill="none" stroke="#afb1b3" stroke-width="1.3"/><path d="M9.5 1 V4.5 H6Z M1.5 10 V6.5 H5Z" fill="#afb1b3"/></svg>
<svg class="a" style="left:789px;top:153px;" width="12" height="11" viewBox="0 0 12 11"><path d="M0 2 H6 M0 5 H5 M0 8 H4" stroke="#afb1b3" stroke-width="1.3"/><path d="M5 11 L11 4 M9 1 L11 3" stroke="#afb1b3" stroke-width="1.6"/></svg>
<svg class="a" style="left:807px;top:153px;" width="12" height="12" viewBox="0 0 12 12"><ellipse cx="5" cy="2.5" rx="4.5" ry="2" fill="#afb1b3"/><rect x="0.5" y="2.5" width="9" height="7" fill="#afb1b3"/><path d="M0.5 5 Q5 7 9.5 5 M0.5 8 Q5 10 9.5 8" stroke="#3c3f41" stroke-width="0.8" fill="none"/><rect x="8" y="8" width="4" height="4" fill="#c75450"/></svg>
<div class="a" style="left:825px;top:151px;width:1px;height:15px;background:#515456;"></div>
<svg class="a" style="left:831px;top:154.5px;" width="10" height="9" viewBox="0 0 10 9"><rect x="0.5" y="0.5" width="9" height="8" fill="none" stroke="#afb1b3" stroke-width="1"/><rect x="0" y="0" width="10" height="2.2" fill="#afb1b3"/><line x1="0" y1="4.3" x2="10" y2="4.3" stroke="#afb1b3" stroke-width="0.9"/><line x1="0" y1="6.4" x2="10" y2="6.4" stroke="#afb1b3" stroke-width="0.9"/><line x1="3.9" y1="2" x2="3.9" y2="9" stroke="#afb1b3" stroke-width="0.8"/><line x1="6.8" y1="2" x2="6.8" y2="9" stroke="#afb1b3" stroke-width="0.8"/></svg>
<svg class="a" style="left:849px;top:153px;" width="11" height="12" viewBox="0 0 11 12"><path d="M2 8 L8 2 L10 4 L4 10 H2Z" fill="none" stroke="#afb1b3" stroke-width="1.1"/><rect x="0" y="11" width="11" height="1" fill="#afb1b3"/></svg>
<svg class="a" style="left:866px;top:153px;" width="12" height="12" viewBox="0 0 12 12"><path d="M0.5 8 L5 4.5 M2 4.5 H5 V7.5" fill="none" stroke="#3592c4" stroke-width="1.3"/><path d="M11.5 1.5 L7 5 M7 2 V5 H10" fill="none" stroke="#3592c4" stroke-width="1.3"/></svg>
<svg class="a" style="left:885px;top:153px;" width="12" height="11" viewBox="0 0 12 11"><rect x="0.5" y="0.5" width="11" height="10" fill="none" stroke="#afb1b3"/><text x="2.2" y="7.8" font-size="5" fill="#afb1b3" font-family="Liberation Sans">DL</text></svg>
<div class="a" style="left:903px;top:151px;width:1px;height:15px;background:#515456;"></div>
<svg class="a" style="left:909px;top:154px;" width="10" height="10" viewBox="0 0 10 10"><path d="M0 0 H10 L6 5 V10 L4 9 V5Z" fill="#afb1b3"/></svg>
<div class="a" style="left:725px;top:437.5px;width:218px;height:14px;background:#0d293e;"></div>
<svg class="a" style="left:729px;top:175px;" width="7" height="5" viewBox="0 0 7 5"><path d="M0.5 0.8 L3.5 3.8 L6.5 0.8" fill="none" stroke="#9a9c9e" stroke-width="1"/></svg>
<svg class="a" style="left:742px;top:172px;" width="12" height="12" viewBox="0 0 12 12"><rect x="0" y="0.5" width="8" height="9" fill="#3592c4"/><path d="M6 8 L10 1 L11 2 L7 9Z" fill="#e8e8e8"/><circle cx="8.5" cy="10" r="1.6" fill="#3fae4a"/></svg>
<div class="t" style="left:757px;top:173.5px;font-size:8.2px;color:#c4c6c8;">db4</div>
<div class="a" style="left:776px;top:172.5px;width:8px;height:11px;border:1px solid #55585a;border-radius:3px"></div>
<div class="t" style="left:778.5px;top:173.5px;font-size:7px;color:#6b6e70;">1</div>
<svg class="a" style="left:741.5px;top:188.5px;" width="7" height="5" viewBox="0 0 7 5"><path d="M0.5 0.8 L3.5 3.8 L6.5 0.8" fill="none" stroke="#9a9c9e" stroke-width="1"/></svg>
<svg class="a" style="left:754.5px;top:186px;" width="12" height="10" viewBox="0 0 12 10"><rect x="5" y="0" width="6" height="4" fill="#4a97bd"/><rect x="0" y="5.5" width="11" height="4.5" fill="#4a97bd"/><path d="M2 1 H4 M2 1 V5" stroke="#afb1b3" stroke-width="1"/></svg>
<div class="t" style="left:769.5px;top:187.5px;font-size:8.2px;color:#c4c6c8;">main</div>
<svg class="a" style="left:754.5px;top:202.5px;" width="7" height="5" viewBox="0 0 7 5"><path d="M0.5 0.8 L3.5 3.8 L6.5 0.8" fill="none" stroke="#9a9c9e" stroke-width="1"/></svg>
<svg class="a" style="left:767.5px;top:201px;" width="10" height="8" viewBox="0 0 10 8"><path d="M0 1 H4 L5 2 H10 V8 H0 Z" fill="#4a97bd"/></svg>
<div class="t" style="left:782.5px;top:201.0px;font-size:8.2px;color:#c4c6c8;">tables</div>
<div class="t" style="left:808px;top:201.0px;font-size:8.2px;color:#6b6e70;">28</div>
<svg class="a" style="left:768.75px;top:216.7px;" width="5" height="7" viewBox="0 0 5 7"><path d="M0.8 0.5 L3.8 3.5 L0.8 6.5" fill="none" stroke="#9a9c9e" stroke-width="1"/></svg>
<svg class="a" style="left:780px;top:214.6px;" width="10" height="9" viewBox="0 0 10 9"><rect x="0.5" y="0.5" width="9" height="8" fill="none" stroke="#afb1b3" stroke-width="1"/><rect x="0" y="0" width="10" height="2.2" fill="#afb1b3"/><line x1="0" y1="4.3" x2="10" y2="4.3" stroke="#afb1b3" stroke-width="0.9"/><line x1="0" y1="6.4" x2="10" y2="6.4" stroke="#afb1b3" stroke-width="0.9"/><line x1="3.9" y1="2" x2="3.9" y2="9" stroke="#afb1b3" stroke-width="0.8"/><line x1="6.8" y1="2" x2="6.8" y2="9" stroke="#afb1b3" stroke-width="0.8"/></svg>
<div class="t" style="left:795px;top:215.7px;font-size:8.2px;color:#c4c6c8;">account_emailaddress</div>
<svg class="a" style="left:768.75px;top:230.76999999999998px;" width="5" height="7" viewBox="0 0 5 7"><path d="M0.8 0.5 L3.8 3.5 L0.8 6.5" fill="none" stroke="#9a9c9e" stroke-width="1"/></svg>
<svg class="a" style="left:780px;top:228.67px;" width="10" height="9" viewBox="0 0 10 9"><rect x="0.5" y="0.5" width="9" height="8" fill="none" stroke="#afb1b3" stroke-width="1"/><rect x="0" y="0" width="10" height="2.2" fill="#afb1b3"/><line x1="0" y1="4.3" x2="10" y2="4.3" stroke="#afb1b3" stroke-width="0.9"/><line x1="0" y1="6.4" x2="10" y2="6.4" stroke="#afb1b3" stroke-width="0.9"/><line x1="3.9" y1="2" x2="3.9" y2="9" stroke="#afb1b3" stroke-width="0.8"/><line x1="6.8" y1="2" x2="6.8" y2="9" stroke="#afb1b3" stroke-width="0.8"/></svg>
<div class="t" style="left:795px;top:229.8px;font-size:8.2px;color:#c4c6c8;">account_emailconfirmation</div>
<svg class="a" style="left:768.75px;top:244.83999999999997px;" width="5" height="7" viewBox="0 0 5 7"><path d="M0.8 0.5 L3.8 3.5 L0.8 6.5" fill="none" stroke="#9a9c9e" stroke-width="1"/></svg>
<svg class="a" style="left:780px;top:242.73999999999998px;" width="10" height="9" viewBox="0 0 10 9"><rect x="0.5" y="0.5" width="9" height="8" fill="none" stroke="#afb1b3" stroke-width="1"/><rect x="0" y="0" width="10" height="2.2" fill="#afb1b3"/><line x1="0" y1="4.3" x2="10" y2="4.3" stroke="#afb1b3" stroke-width="0.9"/><line x1="0" y1="6.4" x2="10" y2="6.4" stroke="#afb1b3" stroke-width="0.9"/><line x1="3.9" y1="2" x2="3.9" y2="9" stroke="#afb1b3" stroke-width="0.8"/><line x1="6.8" y1="2" x2="6.8" y2="9" stroke="#afb1b3" stroke-width="0.8"/></svg>
<div class="t" style="left:795px;top:243.8px;font-size:8.2px;color:#c4c6c8;">auth_group</div>
<svg class="a" style="left:768.75px;top:258.90999999999997px;" width="5" height="7" viewBox="0 0 5 7"><path d="M0.8 0.5 L3.8 3.5 L0.8 6.5" fill="none" stroke="#9a9c9e" stroke-width="1"/></svg>
<svg class="a" style="left:780px;top:256.80999999999995px;" width="10" height="9" viewBox="0 0 10 9"><rect x="0.5" y="0.5" width="9" height="8" fill="none" stroke="#afb1b3" stroke-width="1"/><rect x="0" y="0" width="10" height="2.2" fill="#afb1b3"/><line x1="0" y1="4.3" x2="10" y2="4.3" stroke="#afb1b3" stroke-width="0.9"/><line x1="0" y1="6.4" x2="10" y2="6.4" stroke="#afb1b3" stroke-width="0.9"/><line x1="3.9" y1="2" x2="3.9" y2="9" stroke="#afb1b3" stroke-width="0.8"/><line x1="6.8" y1="2" x2="6.8" y2="9" stroke="#afb1b3" stroke-width="0.8"/></svg>
<div class="t" style="left:795px;top:257.9px;font-size:8.2px;color:#c4c6c8;">auth_group_permissions</div>
<svg class="a" style="left:768.75px;top:272.98px;" width="5" height="7" viewBox="0 0 5 7"><path d="M0.8 0.5 L3.8 3.5 L0.8 6.5" fill="none" stroke="#9a9c9e" stroke-width="1"/></svg>
<svg class="a" style="left:780px;top:270.88px;" width="10" height="9" viewBox="0 0 10 9"><rect x="0.5" y="0.5" width="9" height="8" fill="none" stroke="#afb1b3" stroke-width="1"/><rect x="0" y="0" width="10" height="2.2" fill="#afb1b3"/><line x1="0" y1="4.3" x2="10" y2="4.3" stroke="#afb1b3" stroke-width="0.9"/><line x1="0" y1="6.4" x2="10" y2="6.4" stroke="#afb1b3" stroke-width="0.9"/><line x1="3.9" y1="2" x2="3.9" y2="9" stroke="#afb1b3" stroke-width="0.8"/><line x1="6.8" y1="2" x2="6.8" y2="9" stroke="#afb1b3" stroke-width="0.8"/></svg>
<div class="t" style="left:795px;top:272.0px;font-size:8.2px;color:#c4c6c8;">auth_permission</div>
<svg class="a" style="left:767.5px;top:288.04999999999995px;" width="7" height="5" viewBox="0 0 7 5"><path d="M0.5 0.8 L3.5 3.8 L6.5 0.8" fill="none" stroke="#9a9c9e" stroke-width="1"/></svg>
<svg class="a" style="left:780px;top:284.94999999999993px;" width="10" height="9" viewBox="0 0 10 9"><rect x="0.5" y="0.5" width="9" height="8" fill="none" stroke="#afb1b3" stroke-width="1"/><rect x="0" y="0" width="10" height="2.2" fill="#afb1b3"/><line x1="0" y1="4.3" x2="10" y2="4.3" stroke="#afb1b3" stroke-width="0.9"/><line x1="0" y1="6.4" x2="10" y2="6.4" stroke="#afb1b3" stroke-width="0.9"/><line x1="3.9" y1="2" x2="3.9" y2="9" stroke="#afb1b3" stroke-width="0.8"/><line x1="6.8" y1="2" x2="6.8" y2="9" stroke="#afb1b3" stroke-width="0.8"/></svg>
<div class="t" style="left:795px;top:286.0px;font-size:8.2px;color:#c4c6c8;">custom_user</div>
<svg class="a" style="left:781px;top:301.12px;" width="5" height="7" viewBox="0 0 5 7"><path d="M0.8 0.5 L3.8 3.5 L0.8 6.5" fill="none" stroke="#9a9c9e" stroke-width="1"/></svg>
<svg class="a" style="left:792.5px;top:299.62px;" width="10" height="8" viewBox="0 0 10 8"><path d="M0 1 H4 L5 2 H10 V8 H0 Z" fill="#4a97bd"/></svg>
<div class="t" style="left:808px;top:300.1px;font-size:8.2px;color:#c4c6c8;">columns</div>
<div class="t" style="left:842.8px;top:300.1px;font-size:8.2px;color:#6b6e70">11</div>
<svg class="a" style="left:781px;top:315.19px;" width="5" height="7" viewBox="0 0 5 7"><path d="M0.8 0.5 L3.8 3.5 L0.8 6.5" fill="none" stroke="#9a9c9e" stroke-width="1"/></svg>
<svg class="a" style="left:792.5px;top:313.69px;" width="10" height="8" viewBox="0 0 10 8"><path d="M0 1 H4 L5 2 H10 V8 H0 Z" fill="#4a97bd"/></svg>
<div class="t" style="left:808px;top:314.2px;font-size:8.2px;color:#c4c6c8;">keys</div>
<div class="t" style="left:827.8px;top:314.2px;font-size:8.2px;color:#6b6e70">2</div>
<svg class="a" style="left:781px;top:329.26px;" width="5" height="7" viewBox="0 0 5 7"><path d="M0.8 0.5 L3.8 3.5 L0.8 6.5" fill="none" stroke="#9a9c9e" stroke-width="1"/></svg>
<svg class="a" style="left:792.5px;top:327.76px;" width="10" height="8" viewBox="0 0 10 8"><path d="M0 1 H4 L5 2 H10 V8 H0 Z" fill="#4a97bd"/></svg>
<div class="t" style="left:808px;top:328.3px;font-size:8.2px;color:#c4c6c8;">indexes</div>
<div class="t" style="left:840.8px;top:328.3px;font-size:8.2px;color:#6b6e70">1</div>
<svg class="a" style="left:768.75px;top:343.33px;" width="5" height="7" viewBox="0 0 5 7"><path d="M0.8 0.5 L3.8 3.5 L0.8 6.5" fill="none" stroke="#9a9c9e" stroke-width="1"/></svg>
<svg class="a" style="left:780px;top:341.22999999999996px;" width="10" height="9" viewBox="0 0 10 9"><rect x="0.5" y="0.5" width="9" height="8" fill="none" stroke="#afb1b3" stroke-width="1"/><rect x="0" y="0" width="10" height="2.2" fill="#afb1b3"/><line x1="0" y1="4.3" x2="10" y2="4.3" stroke="#afb1b3" stroke-width="0.9"/><line x1="0" y1="6.4" x2="10" y2="6.4" stroke="#afb1b3" stroke-width="0.9"/><line x1="3.9" y1="2" x2="3.9" y2="9" stroke="#afb1b3" stroke-width="0.8"/><line x1="6.8" y1="2" x2="6.8" y2="9" stroke="#afb1b3" stroke-width="0.8"/></svg>
<div class="t" style="left:795px;top:342.3px;font-size:8.2px;color:#c4c6c8;">custom_user_groups</div>
<svg class="a" style="left:768.75px;top:357.4px;" width="5" height="7" viewBox="0 0 5 7"><path d="M0.8 0.5 L3.8 3.5 L0.8 6.5" fill="none" stroke="#9a9c9e" stroke-width="1"/></svg>
<svg class="a" style="left:780px;top:355.29999999999995px;" width="10" height="9" viewBox="0 0 10 9"><rect x="0.5" y="0.5" width="9" height="8" fill="none" stroke="#afb1b3" stroke-width="1"/><rect x="0" y="0" width="10" height="2.2" fill="#afb1b3"/><line x1="0" y1="4.3" x2="10" y2="4.3" stroke="#afb1b3" stroke-width="0.9"/><line x1="0" y1="6.4" x2="10" y2="6.4" stroke="#afb1b3" stroke-width="0.9"/><line x1="3.9" y1="2" x2="3.9" y2="9" stroke="#afb1b3" stroke-width="0.8"/><line x1="6.8" y1="2" x2="6.8" y2="9" stroke="#afb1b3" stroke-width="0.8"/></svg>
<div class="t" style="left:795px;top:356.4px;font-size:8.2px;color:#c4c6c8;">custom_user_user_permissions</div>
<svg class="a" style="left:768.75px;top:371.47px;" width="5" height="7" viewBox="0 0 5 7"><path d="M0.8 0.5 L3.8 3.5 L0.8 6.5" fill="none" stroke="#9a9c9e" stroke-width="1"/></svg>
<svg class="a" style="left:780px;top:369.37px;" width="10" height="9" viewBox="0 0 10 9"><rect x="0.5" y="0.5" width="9" height="8" fill="none" stroke="#afb1b3" stroke-width="1"/><rect x="0" y="0" width="10" height="2.2" fill="#afb1b3"/><line x1="0" y1="4.3" x2="10" y2="4.3" stroke="#afb1b3" stroke-width="0.9"/><line x1="0" y1="6.4" x2="10" y2="6.4" stroke="#afb1b3" stroke-width="0.9"/><line x1="3.9" y1="2" x2="3.9" y2="9" stroke="#afb1b3" stroke-width="0.8"/><line x1="6.8" y1="2" x2="6.8" y2="9" stroke="#afb1b3" stroke-width="0.8"/></svg>
<div class="t" style="left:795px;top:370.5px;font-size:8.2px;color:#c4c6c8;">django_admin_log</div>
<svg class="a" style="left:768.75px;top:385.53999999999996px;" width="5" height="7" viewBox="0 0 5 7"><path d="M0.8 0.5 L3.8 3.5 L0.8 6.5" fill="none" stroke="#9a9c9e" stroke-width="1"/></svg>
<svg class="a" style="left:780px;top:383.43999999999994px;" width="10" height="9" viewBox="0 0 10 9"><rect x="0.5" y="0.5" width="9" height="8" fill="none" stroke="#afb1b3" stroke-width="1"/><rect x="0" y="0" width="10" height="2.2" fill="#afb1b3"/><line x1="0" y1="4.3" x2="10" y2="4.3" stroke="#afb1b3" stroke-width="0.9"/><line x1="0" y1="6.4" x2="10" y2="6.4" stroke="#afb1b3" stroke-width="0.9"/><line x1="3.9" y1="2" x2="3.9" y2="9" stroke="#afb1b3" stroke-width="0.8"/><line x1="6.8" y1="2" x2="6.8" y2="9" stroke="#afb1b3" stroke-width="0.8"/></svg>
<div class="t" style="left:795px;top:384.5px;font-size:8.2px;color:#c4c6c8;">django_content_type</div>
<svg class="a" style="left:768.75px;top:399.61px;" width="5" height="7" viewBox="0 0 5 7"><path d="M0.8 0.5 L3.8 3.5 L0.8 6.5" fill="none" stroke="#9a9c9e" stroke-width="1"/></svg>
<svg class="a" style="left:780px;top:397.51px;" width="10" height="9" viewBox="0 0 10 9"><rect x="0.5" y="0.5" width="9" height="8" fill="none" stroke="#afb1b3" stroke-width="1"/><rect x="0" y="0" width="10" height="2.2" fill="#afb1b3"/><line x1="0" y1="4.3" x2="10" y2="4.3" stroke="#afb1b3" stroke-width="0.9"/><line x1="0" y1="6.4" x2="10" y2="6.4" stroke="#afb1b3" stroke-width="0.9"/><line x1="3.9" y1="2" x2="3.9" y2="9" stroke="#afb1b3" stroke-width="0.8"/><line x1="6.8" y1="2" x2="6.8" y2="9" stroke="#afb1b3" stroke-width="0.8"/></svg>
<div class="t" style="left:795px;top:398.6px;font-size:8.2px;color:#c4c6c8;">django_migrations</div>
<svg class="a" style="left:768.75px;top:413.68px;" width="5" height="7" viewBox="0 0 5 7"><path d="M0.8 0.5 L3.8 3.5 L0.8 6.5" fill="none" stroke="#9a9c9e" stroke-width="1"/></svg>
<svg class="a" style="left:780px;top:411.58px;" width="10" height="9" viewBox="0 0 10 9"><rect x="0.5" y="0.5" width="9" height="8" fill="none" stroke="#afb1b3" stroke-width="1"/><rect x="0" y="0" width="10" height="2.2" fill="#afb1b3"/><line x1="0" y1="4.3" x2="10" y2="4.3" stroke="#afb1b3" stroke-width="0.9"/><line x1="0" y1="6.4" x2="10" y2="6.4" stroke="#afb1b3" stroke-width="0.9"/><line x1="3.9" y1="2" x2="3.9" y2="9" stroke="#afb1b3" stroke-width="0.8"/><line x1="6.8" y1="2" x2="6.8" y2="9" stroke="#afb1b3" stroke-width="0.8"/></svg>
<div class="t" style="left:795px;top:412.7px;font-size:8.2px;color:#c4c6c8;">django_session</div>
<svg class="a" style="left:768.75px;top:427.75px;" width="5" height="7" viewBox="0 0 5 7"><path d="M0.8 0.5 L3.8 3.5 L0.8 6.5" fill="none" stroke="#9a9c9e" stroke-width="1"/></svg>
<svg class="a" style="left:780px;top:425.65px;" width="10" height="9" viewBox="0 0 10 9"><rect x="0.5" y="0.5" width="9" height="8" fill="none" stroke="#afb1b3" stroke-width="1"/><rect x="0" y="0" width="10" height="2.2" fill="#afb1b3"/><line x1="0" y1="4.3" x2="10" y2="4.3" stroke="#afb1b3" stroke-width="0.9"/><line x1="0" y1="6.4" x2="10" y2="6.4" stroke="#afb1b3" stroke-width="0.9"/><line x1="3.9" y1="2" x2="3.9" y2="9" stroke="#afb1b3" stroke-width="0.8"/><line x1="6.8" y1="2" x2="6.8" y2="9" stroke="#afb1b3" stroke-width="0.8"/></svg>
<div class="t" style="left:795px;top:426.8px;font-size:8.2px;color:#c4c6c8;">django_site</div>
<svg class="a" style="left:767.5px;top:442.82px;" width="7" height="5" viewBox="0 0 7 5"><path d="M0.5 0.8 L3.5 3.8 L6.5 0.8" fill="none" stroke="#9a9c9e" stroke-width="1"/></svg>
<svg class="a" style="left:780px;top:439.71999999999997px;" width="10" height="9" viewBox="0 0 10 9"><rect x="0.5" y="0.5" width="9" height="8" fill="none" stroke="#afb1b3" stroke-width="1"/><rect x="0" y="0" width="10" height="2.2" fill="#afb1b3"/><line x1="0" y1="4.3" x2="10" y2="4.3" stroke="#afb1b3" stroke-width="0.9"/><line x1="0" y1="6.4" x2="10" y2="6.4" stroke="#afb1b3" stroke-width="0.9"/><line x1="3.9" y1="2" x2="3.9" y2="9" stroke="#afb1b3" stroke-width="0.8"/><line x1="6.8" y1="2" x2="6.8" y2="9" stroke="#afb1b3" stroke-width="0.8"/></svg>
<div class="t" style="left:795px;top:440.8px;font-size:8.2px;color:#c4c6c8;">metal_metal</div>
<svg class="a" style="left:779.5px;top:456.89px;" width="7" height="5" viewBox="0 0 7 5"><path d="M0.5 0.8 L3.5 3.8 L6.5 0.8" fill="none" stroke="#9a9c9e" stroke-width="1"/></svg>
<svg class="a" style="left:792.5px;top:454.39px;" width="10" height="8" viewBox="0 0 10 8"><path d="M0 1 H4 L5 2 H10 V8 H0 Z" fill="#4a97bd"/></svg>
<div class="t" style="left:808px;top:454.9px;font-size:8.2px;color:#c4c6c8;">columns</div>
<div class="t" style="left:842.6px;top:454.9px;font-size:8.2px;color:#6b6e70;">4</div>
<svg class="a" style="left:805px;top:468.46px;" width="12" height="10" viewBox="0 0 12 10"><rect x="0" y="0" width="1.5" height="6" fill="#afb1b3"/><circle cx="0.8" cy="8.5" r="1.1" fill="#afb1b3"/><path d="M3 1 H8 M3 4 H8 M3 7 H8" stroke="#afb1b3" stroke-width="1.1"/><circle cx="9" cy="5" r="1.8" fill="#e0a733"/><path d="M9 6 V10" stroke="#e0a733" stroke-width="1.1"/></svg>
<div class="t" style="left:820.5px;top:469.0px;font-size:8.2px;color:#c4c6c8;">id</div>
<div class="t" style="left:833px;top:469.0px;font-size:8.2px;color:#6b6e70;">integer (auto increment)</div>
<svg class="a" style="left:805px;top:482.53px;" width="12" height="10" viewBox="0 0 12 10"><rect x="0" y="0" width="1.5" height="6" fill="#afb1b3"/><circle cx="0.8" cy="8.5" r="1.1" fill="#afb1b3"/><path d="M3 1 H10 M3 4 H10 M3 7 H10" stroke="#afb1b3" stroke-width="1.1"/></svg>
<div class="t" style="left:820.5px;top:483.0px;font-size:8.2px;color:#c4c6c8;">name</div>
<div class="t" style="left:847px;top:483.0px;font-size:8.2px;color:#6b6e70;">varchar(100)</div>
<svg class="a" style="left:805px;top:496.59999999999997px;" width="11" height="9" viewBox="0 0 11 9"><rect x="0" y="0" width="3" height="9" fill="#afb1b3"/><rect x="3" y="0.4" width="7.2" height="8.2" fill="none" stroke="#afb1b3" stroke-width="0.8"/><path d="M3 2.5 H10 M3 4.5 H10 M3 6.5 H10" stroke="#afb1b3" stroke-width="0.8"/><path d="M6.5 0 V9" stroke="#afb1b3" stroke-width="0.6"/></svg>
<div class="t" style="left:820.5px;top:497.1px;font-size:8.2px;color:#c4c6c8;">buy</div>
<div class="t" style="left:841px;top:497.1px;font-size:8.2px;color:#6b6e70;">integer unsigned</div>
<svg class="a" style="left:805px;top:510.6700000000001px;" width="11" height="9" viewBox="0 0 11 9"><rect x="0" y="0" width="3" height="9" fill="#afb1b3"/><rect x="3" y="0.4" width="7.2" height="8.2" fill="none" stroke="#afb1b3" stroke-width="0.8"/><path d="M3 2.5 H10 M3 4.5 H10 M3 6.5 H10" stroke="#afb1b3" stroke-width="0.8"/><path d="M6.5 0 V9" stroke="#afb1b3" stroke-width="0.6"/></svg>
<div class="t" style="left:820.5px;top:511.2px;font-size:8.2px;color:#c4c6c8;">sell</div>
<div class="t" style="left:838px;top:511.2px;font-size:8.2px;color:#6b6e70;">integer unsigned</div>
<svg class="a" style="left:781px;top:526.24px;" width="5" height="7" viewBox="0 0 5 7"><path d="M0.8 0.5 L3.8 3.5 L0.8 6.5" fill="none" stroke="#9a9c9e" stroke-width="1"/></svg>
<svg class="a" style="left:792.5px;top:524.74px;" width="10" height="8" viewBox="0 0 10 8"><path d="M0 1 H4 L5 2 H10 V8 H0 Z" fill="#4a97bd"/></svg>
<div class="t" style="left:808px;top:525.2px;font-size:8.2px;color:#c4c6c8;">keys</div>
<div class="t" style="left:827.8px;top:525.2px;font-size:8.2px;color:#6b6e70">1</div>
<svg class="a" style="left:781px;top:540.31px;" width="5" height="7" viewBox="0 0 5 7"><path d="M0.8 0.5 L3.8 3.5 L0.8 6.5" fill="none" stroke="#9a9c9e" stroke-width="1"/></svg>
<svg class="a" style="left:792.5px;top:538.81px;" width="10" height="8" viewBox="0 0 10 8"><path d="M0 1 H4 L5 2 H10 V8 H0 Z" fill="#4a97bd"/></svg>
<div class="t" style="left:808px;top:539.3px;font-size:8.2px;color:#c4c6c8;">checks</div>
<div class="t" style="left:836.9px;top:539.3px;font-size:8.2px;color:#6b6e70">2</div>
<svg class="a" style="left:768.75px;top:554.38px;" width="5" height="7" viewBox="0 0 5 7"><path d="M0.8 0.5 L3.8 3.5 L0.8 6.5" fill="none" stroke="#9a9c9e" stroke-width="1"/></svg>
<svg class="a" style="left:780px;top:552.28px;" width="10" height="9" viewBox="0 0 10 9"><rect x="0.5" y="0.5" width="9" height="8" fill="none" stroke="#afb1b3" stroke-width="1"/><rect x="0" y="0" width="10" height="2.2" fill="#afb1b3"/><line x1="0" y1="4.3" x2="10" y2="4.3" stroke="#afb1b3" stroke-width="0.9"/><line x1="0" y1="6.4" x2="10" y2="6.4" stroke="#afb1b3" stroke-width="0.9"/><line x1="3.9" y1="2" x2="3.9" y2="9" stroke="#afb1b3" stroke-width="0.8"/><line x1="6.8" y1="2" x2="6.8" y2="9" stroke="#afb1b3" stroke-width="0.8"/></svg>
<div class="t" style="left:795px;top:553.4px;font-size:8.2px;color:#c4c6c8;">metal_metalpurchase</div>
<div class="a" style="left:937px;top:171px;width:6px;height:262px;background:#585b5d;"></div>
<div class="a" style="left:943px;top:130px;width:17px;height:435px;background:#3d4241;"></div>
<div class="v" style="left:955.5px;top:151px;font-size:7.6px;color:#a9abad;transform:rotate(90deg)">Notifications</div>
<svg class="a" style="left:945.5px;top:138.5px;" width="11" height="10" viewBox="0 0 11 10"><path d="M2 7 V4.5 Q2 1.5 5.5 1.5 Q9 1.5 9 4.5 V7 L10 8 H1Z" fill="#afb1b3"/><rect x="4.5" y="8.5" width="2" height="1.5" fill="#afb1b3"/><circle cx="8.8" cy="2" r="1.8" fill="#e05555"/></svg>
<svg class="a" style="left:945.5px;top:210px;" width="11" height="11" viewBox="0 0 11 11"><circle cx="3" cy="3.5" r="2.5" fill="none" stroke="#d0d2d4" stroke-width="1.2"/><circle cx="8" cy="3.5" r="2.5" fill="none" stroke="#d0d2d4" stroke-width="1.2"/><rect x="0.6" y="5" width="9.8" height="5.5" rx="2.5" fill="none" stroke="#d0d2d4" stroke-width="1.2"/></svg>
<div class="v" style="left:955.5px;top:224.5px;font-size:7.3px;color:#a9abad;transform:rotate(90deg)">GitHub Copilot</div>
<div class="a" style="left:945px;top:283.5px;width:15px;height:54.5px;background:#2d2f31;"></div>
<svg class="a" style="left:946px;top:291px;" width="9" height="10" viewBox="0 0 9 10"><ellipse cx="4.5" cy="2" rx="4" ry="1.8" fill="#c4c6c8"/><rect x="0.5" y="2" width="8" height="6.5" fill="#c4c6c8"/><ellipse cx="4.5" cy="8.3" rx="4" ry="1.6" fill="#c4c6c8"/><path d="M3 2.5 V9.5 M6 2.5 V9.5" stroke="#2d2f31" stroke-width="0.7"/></svg>
<div class="v" style="left:955.5px;top:303.5px;font-size:7.0px;color:#d8dadc;transform:rotate(90deg)">Database</div>
<svg class="a" style="left:946px;top:347px;" width="9" height="11" viewBox="0 0 9 11"><rect x="0.5" y="0.5" width="8" height="10" fill="none" stroke="#9a9c9e"/><path d="M0 3.5 H9 M0 6 H9 M0 8.5 H9 M3 0 V11 M6 0 V11" stroke="#9a9c9e" stroke-width="0.8"/></svg>
<div class="v" style="left:955.5px;top:362px;font-size:7.8px;color:#9a9c9e;transform:rotate(90deg)">SciView</div>
<div class="a" style="left:0px;top:565px;width:960px;height:31px;background:#3d4241;"></div>
<div class="a" style="left:0px;top:565px;width:960px;height:1px;background:#313433;"></div>
<div class="a" style="left:0px;top:582px;width:960px;height:0.8px;background:#393d3c;"></div>
<div class="t" style="left:33px;top:570.5px;font-size:7.5px;color:#b4b6b8;">Git</div>
<div class="t" style="left:68px;top:570.5px;font-size:7.5px;color:#b4b6b8;">Run</div>
<div class="t" style="left:107px;top:570.5px;font-size:7.5px;color:#b4b6b8;">TODO</div>
<div class="t" style="left:154px;top:570.5px;font-size:7.5px;color:#b4b6b8;">Problems</div>
<div class="t" style="left:212px;top:570.5px;font-size:7.5px;color:#b4b6b8;">Terminal</div>
<div class="t" style="left:270px;top:570.5px;font-size:7.5px;color:#b4b6b8;">Python Packages</div>
<div class="t" style="left:356px;top:570.5px;font-size:7.5px;color:#b4b6b8;">Python Console</div>
<div class="t" style="left:436px;top:570.5px;font-size:7.5px;color:#b4b6b8;">Services</div>
<div class="t" style="left:492px;top:570.5px;font-size:7.5px;color:#b4b6b8;">Database Changes</div>
<svg class="a" style="left:22.5px;top:570px;" width="8" height="10" viewBox="0 0 8 10"><path d="M1.5 0 V10 M1.5 6 Q6 6 6 1" fill="none" stroke="#afb1b3" stroke-width="1.3"/><circle cx="6" cy="2" r="1.3" fill="#afb1b3"/></svg>
<svg class="a" style="left:57px;top:570px;" width="9" height="10" viewBox="0 0 9 10"><path d="M0 0 L7 4.5 L0 9Z" fill="#afb1b3"/><rect x="5" y="6" width="3.5" height="3.5" fill="#3fae4a"/></svg>
<svg class="a" style="left:95px;top:571px;" width="9" height="8" viewBox="0 0 9 8"><path d="M0 1 H9 M0 4 H9 M0 7 H9" stroke="#afb1b3" stroke-width="1.2"/></svg>
<svg class="a" style="left:142px;top:570px;" width="9" height="9" viewBox="0 0 9 9"><circle cx="4.5" cy="4.5" r="4.5" fill="#afb1b3"/><rect x="4" y="2" width="1.2" height="3.5" fill="#3c3f41"/><rect x="4" y="6.2" width="1.2" height="1.2" fill="#3c3f41"/></svg>
<svg class="a" style="left:200px;top:570px;" width="10" height="9" viewBox="0 0 10 9"><rect x="0" y="0" width="10" height="9" fill="#afb1b3"/><path d="M2 2 L4.5 4 L2 6" stroke="#3c3f41" stroke-width="1.1" fill="none"/></svg>
<svg class="a" style="left:257px;top:569px;" width="10" height="11" viewBox="0 0 10 11"><path d="M5 0 L10 2.5 L5 5 L0 2.5Z M0 5 L5 7.5 L10 5 M0 7.5 L5 10 L10 7.5" fill="none" stroke="#afb1b3" stroke-width="1.1"/></svg>
<svg class="a" style="left:344px;top:570px;" width="10" height="10" viewBox="0 0 10 10"><path d="M3 0 H7 V4 H1 V8 H3 M7 10 H3 V6 H9 V2 H7" fill="none" stroke="#afb1b3" stroke-width="1.6"/></svg>
<svg class="a" style="left:424px;top:570px;" width="10" height="10" viewBox="0 0 10 10"><circle cx="5" cy="5" r="4.5" fill="#afb1b3"/><path d="M3.5 2.5 L7.5 5 L3.5 7.5Z" fill="#3c3f41"/></svg>
<svg class="a" style="left:480px;top:570px;" width="10" height="10" viewBox="0 0 10 10"><ellipse cx="4.5" cy="2" rx="4" ry="1.8" fill="none" stroke="#afb1b3"/><path d="M0.5 2 V8 Q4.5 10 8.5 8 V2 M0.5 5 Q4.5 7 8.5 5" fill="none" stroke="#afb1b3"/></svg>
<svg class="a" style="left:8px;top:585px;" width="10" height="9" viewBox="0 0 10 9"><rect x="2.5" y="0.5" width="7" height="6" fill="none" stroke="#afb1b3" stroke-width="0.9"/><path d="M0.5 2.5 V8.5 H7.5" fill="none" stroke="#afb1b3" stroke-width="0.9"/></svg>
<div class="t" style="left:28px;top:584.5px;font-size:8.2px;color:#b4b6b8;">3 rows retrieved starting from 1 in 23 ms (execution: 5 ms, fetching: 18 ms)</div>
<div class="t" style="left:787.5px;top:584.5px;font-size:8.2px;color:#b4b6b8;">Python 3.11 (flask_to_django)</div>
<svg class="a" style="left:906px;top:584px;" width="7" height="10" viewBox="0 0 7 10"><path d="M1.5 0 V10 M1.5 6 Q6 6 6 1" fill="none" stroke="#afb1b3" stroke-width="1.2"/><circle cx="6" cy="2" r="1.2" fill="#afb1b3"/></svg>
<div class="t" style="left:918px;top:584.5px;font-size:8.2px;color:#b4b6b8;">main</div>
<svg class="a" style="left:942px;top:584px;" width="10" height="10" viewBox="0 0 10 10"><rect x="0" y="4.5" width="7" height="5" fill="#afb1b3"/><path d="M5 4.5 V2.5 Q5 0.5 7 0.5 Q9 0.5 9 2.5" fill="none" stroke="#afb1b3" stroke-width="1.1"/></svg>
<div class="a" style="left:0px;top:596px;width:960px;height:34px;background:linear-gradient(90deg,#1a2937 0%,#17283f 28%,#14264a 45%,#152544 60%,#172434 80%,#1b2732 100%);"></div>
<svg class="a" style="left:284px;top:605px;" width="18" height="17" viewBox="0 0 18 17"><rect x="0" y="0" width="8.5" height="8" fill="#5cc7f4"/><rect x="9.5" y="0" width="8.5" height="8" fill="#4ab8ef"/><rect x="0" y="9" width="8.5" height="8" fill="#3aa8e8"/><rect x="9.5" y="9" width="8.5" height="8" fill="#2f9be2"/></svg>
<div class="a" style="left:311px;top:602px;width:154px;height:22px;border-radius:11px;background:#26375a"></div>
<svg class="a" style="left:318px;top:607px;" width="12" height="12" viewBox="0 0 12 12"><circle cx="5" cy="5" r="3.8" fill="none" stroke="#e8e8e8" stroke-width="1.3"/><path d="M7.8 7.8 L11 11" stroke="#e8e8e8" stroke-width="1.4"/></svg>
<div class="t" style="left:336px;top:608.0px;font-size:9px;color:#d8dadc;">検索</div>
<div class="a" style="left:447px;top:606px;width:13px;height:13px;border-radius:50%;background:#ffffff"></div>
<div class="t" style="left:449.5px;top:607.5px;font-size:10px;color:#2a74d8;font-weight:bold">b</div>
<svg class="a" style="left:474px;top:604px;" width="18" height="17" viewBox="0 0 18 17"><rect x="0" y="6" width="11" height="10" fill="#555"/><rect x="6" y="2" width="11" height="10" fill="#d8d8d8"/></svg>
<svg class="a" style="left:504px;top:604px;" width="18" height="18" viewBox="0 0 18 18"><circle cx="9" cy="9" r="8.5" fill="#db4437"/><path d="M9 9 L16.5 5 A8.5 8.5 0 0 1 9 17.5Z" fill="#f4c20d"/><path d="M9 9 L9 17.5 A8.5 8.5 0 0 1 1.5 5Z" fill="#0f9d58"/><circle cx="9" cy="9" r="4" fill="#fff"/><circle cx="9" cy="9" r="3" fill="#4285f4"/></svg>
<div class="a" style="left:514px;top:600px;width:9px;height:9px;border-radius:50%;background:#e8742e"></div>
<div class="a" style="left:510px;top:624px;width:5px;height:2px;background:#9aa;"></div>
<div class="a" style="left:530px;top:600px;width:27px;height:26px;border-radius:4px;background:#2a3346"></div>
<svg class="a" style="left:535px;top:603px;" width="17" height="17" viewBox="0 0 17 17"><path d="M1 3 L12 0 L17 9 L8 17 L0 12Z" fill="#21d789"/><path d="M12 0 L17 9 L10 6Z" fill="#fcf84a"/><rect x="3" y="3" width="11" height="11" fill="#000"/><text x="4" y="9" font-size="5.5" fill="#fff" font-weight="bold" font-family="Liberation Sans">PC</text><rect x="4" y="11" width="4" height="1" fill="#fff"/></svg>
<div class="a" style="left:538px;top:624px;width:11px;height:2px;background:#5ab0e8;"></div>
<svg class="a" style="left:566px;top:604px;" width="15" height="18" viewBox="0 0 15 18"><rect x="1" y="1" width="12" height="16" fill="#e8e8e8"/><path d="M3 5 H11 M3 8 H11 M3 11 H9" stroke="#888" stroke-width="0.8"/><path d="M9 12 L15 3" stroke="#e08040" stroke-width="2"/></svg>
<div class="a" style="left:572px;top:624px;width:5px;height:2px;background:#9aa;"></div>
<svg class="a" style="left:598px;top:604px;" width="18" height="18" viewBox="0 0 18 18"><circle cx="9" cy="9" r="8.5" fill="#db4437"/><path d="M9 9 L16.5 5 A8.5 8.5 0 0 1 9 17.5Z" fill="#f4c20d"/><path d="M9 9 L9 17.5 A8.5 8.5 0 0 1 1.5 5Z" fill="#0f9d58"/><circle cx="9" cy="9" r="4" fill="#fff"/><circle cx="9" cy="9" r="3" fill="#4285f4"/></svg>
<div class="a" style="left:607px;top:600px;width:9px;height:8px;border-radius:50%;background:#5ab0e8"></div>
<div class="a" style="left:604px;top:624px;width:5px;height:2px;background:#9aa;"></div>
<svg class="a" style="left:627px;top:603px;" width="18" height="18" viewBox="0 0 18 18"><path d="M9.00 0.50 L10.66 0.66 L11.49 2.99 L12.61 3.60 L15.01 2.99 L16.07 4.28 L15.01 6.51 L15.38 7.73 L17.50 9.00 L17.34 10.66 L15.01 11.49 L14.40 12.61 L15.01 15.01 L13.72 16.07 L11.49 15.01 L10.27 15.38 L9.00 17.50 L7.34 17.34 L6.51 15.01 L5.39 14.40 L2.99 15.01 L1.93 13.72 L2.99 11.49 L2.62 10.27 L0.50 9.00 L0.66 7.34 L2.99 6.51 L3.60 5.39 L2.99 2.99 L4.28 1.93 L6.51 2.99 L7.73 2.62Z" fill="#8d99a6"/><circle cx="9" cy="9" r="3.6" fill="#1f5fa8"/><circle cx="9" cy="9" r="2.2" fill="#8d99a6"/></svg>
<div class="a" style="left:634px;top:624px;width:5px;height:2px;background:#9aa;"></div>
<svg class="a" style="left:658px;top:605px;" width="18" height="15" viewBox="0 0 18 15"><path d="M0 1 H7 L8 3 H18 V15 H0Z" fill="#f8c94a"/><rect x="0" y="6" width="18" height="9" fill="#fcd660"/><rect x="4" y="9" width="10" height="3" fill="#3a8ee0"/></svg>
<div class="a" style="left:665px;top:624px;width:5px;height:2px;background:#9aa;"></div>
<svg class="a" style="left:707px;top:609.5px;" width="9" height="6" viewBox="0 0 9 6"><path d="M0.5 5 L4.5 1 L8.5 5" fill="none" stroke="#e8e8e8" stroke-width="1.2"/></svg>
<svg class="a" style="left:728px;top:608px;" width="13" height="12" viewBox="0 0 13 12"><circle cx="3.5" cy="1.8" r="1.6" fill="#e8e8e8"/><rect x="1" y="3.5" width="5" height="2.5" fill="#e8e8e8"/><circle cx="9.5" cy="1.8" r="1.5" fill="#e8e8e8"/><path d="M8 4 H12 L10 6Z" fill="#e8e8e8"/><rect x="0" y="5.5" width="6.5" height="6.5" fill="#c8242a"/><text x="1.6" y="11" font-size="5.5" fill="#fff" font-family="Liberation Sans" font-weight="bold">2</text></svg>
<svg class="a" style="left:752px;top:606px;" width="10" height="15" viewBox="0 0 10 15"><rect x="2.5" y="0.5" width="5" height="8.5" rx="2.5" fill="none" stroke="#6fb9c9" stroke-width="1.3"/><path d="M1 6.5 Q5 11.5 9 6.5 M5 10.5 V14" fill="none" stroke="#6fb9c9" stroke-width="1.2"/></svg>
<div class="t" style="left:776px;top:609.0px;font-size:9.5px;color:#c8cacc;">A</div>
<div class="a" style="left:800px;top:607.5px;width:10.5px;height:10.5px;border-radius:50%;background:#2a6fd6"></div>
<div class="a" style="left:807px;top:614px;width:4.5px;height:4.5px;border-radius:50%;background:#e85a3a"></div>
<svg class="a" style="left:826px;top:608px;" width="13" height="10" viewBox="0 0 13 10"><path d="M1 3.8 Q6.5 -1 12 3.8 M2.8 6 Q6.5 3 10.2 6 M4.6 8 Q6.5 6.8 8.4 8" fill="none" stroke="#e8e8e8" stroke-width="1.2"/><circle cx="6.5" cy="9" r="1" fill="#e8e8e8"/></svg>
<svg class="a" style="left:844px;top:607.5px;" width="13" height="12" viewBox="0 0 13 12"><path d="M0.5 4 H3 L6 1 V11 L3 8 H0.5Z" fill="none" stroke="#e8e8e8" stroke-width="1"/><path d="M8 3.5 Q10 6 8 8.5 M10 1.5 Q13 6 10 10.5" fill="none" stroke="#e8e8e8" stroke-width="1"/></svg>
<svg class="a" style="left:860px;top:607px;" width="13" height="12" viewBox="0 0 13 12"><rect x="1" y="4.5" width="10" height="6.5" rx="1" fill="none" stroke="#e8e8e8" stroke-width="1.1"/><rect x="11" y="6.5" width="1.5" height="2.5" fill="#e8e8e8"/><path d="M2.5 0 L1.5 3 L4 2.5 L3 5.5" fill="none" stroke="#e8e8e8" stroke-width="0.9"/></svg>
<div class="t" style="left:911.5px;top:602.5px;font-size:8.3px;color:#e8e8e8;">9:46</div>
<div class="t" style="left:884px;top:613.5px;font-size:8.3px;color:#e8e8e8;">2023/06/25</div>
<div class="a" style="left:935px;top:607px;width:11px;height:11px;border-radius:50%;background:#4cc2ff"></div>
<div class="t" style="left:938.5px;top:607.5px;font-size:7px;color:#1a2a3a;">1</div>
<svg class="a" style="left:547.5px;top:335.7px;" width="11" height="15" viewBox="0 0 11 15"><path d="M1 1 V11.5 L3.6 9.2 L5.6 13.2 L7.4 12.3 L5.5 8.4 L8.8 8.4 Z" fill="#ffffff" stroke="#000" stroke-width="1"/></svg>
<div class="a" style="left:962px;top:270px;width:318px;height:180px;background:#121212;"></div>
<div class="a" style="left:1081px;top:320px;width:80px;height:80px;border-radius:50%;background:#4a5b63"></div>
<div class="t" style="left:1109.5px;top:336px;font-size:45px;line-height:50px;color:#fff;transform:scaleX(0.92);transform-origin:0 0;-webkit-text-stroke:0.6px #fff">h</div>
<div class="t" style="left:969.7px;top:429.8px;font-size:15px;line-height:16px;color:#f0f0f0;transform:scaleX(0.853);transform-origin:0 0">hiroko fujimoto</div>
</body></html>
